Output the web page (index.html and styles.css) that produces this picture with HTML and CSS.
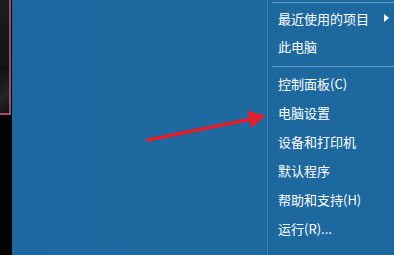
FILE: index.html
```html
<!DOCTYPE html>
<html lang="zh">
<head>
<meta charset="utf-8">
<link rel="stylesheet" href="styles.css">
</head>
<body>
<div class="screen">
  <div class="strip">
    <div class="thumb"></div>
  </div>
  <div class="desktop"></div>
  <div class="menu">
    <div class="sep first"></div>
    <div class="group g1">
      <div class="item">最近使用的项目<span class="caret"></span></div>
      <div class="item">此电脑</div>
    </div>
    <div class="sep second"></div>
    <div class="group g2">
      <div class="item">控制面板(C)</div>
      <div class="item">电脑设置</div>
      <div class="item">设备和打印机</div>
      <div class="item">默认程序</div>
      <div class="item">帮助和支持(H)</div>
      <div class="item">运行(R)...</div>
    </div>
  </div>
  <svg class="arrow" width="394" height="255" viewBox="0 0 394 255">
    <line x1="148" y1="140" x2="252" y2="119" stroke="#e21f2c" stroke-width="3.5" stroke-linecap="round"/>
    <polygon points="266,116 247.5,110.5 251,128" fill="#e21f2c"/>
  </svg>
</div>
</body>
</html>
```

FILE: styles.css
```css
html, body {
  margin: 0;
  padding: 0;
}
body {
  width: 394px;
  height: 255px;
  overflow: hidden;
  background: #1e68a0;
  font-family: "Noto Sans CJK SC", "Noto Sans", sans-serif;
}
.screen {
  position: relative;
  display: flex;
  width: 394px;
  height: 255px;
}
.strip {
  width: 12px;
  flex: none;
  background: #030304;
}
.thumb {
  width: 9px;
  height: 113px;
  background: linear-gradient(160deg, #1c1b20 0%, #121115 60%, #26252a 85%, #111014 100%);
  border-right: 2px solid #a34f62;
  border-bottom: 2px solid #a34f62;
}
.desktop {
  width: 255px;
  flex: none;
  background: linear-gradient(90deg, #1e67a0, #1f69a1);
}
.menu {
  flex: 1;
  border-left: 1px solid #3c7fb6;
  background: #1e68a0;
  color: #ffffff;
  font-size: 13px;
  display: flex;
  flex-direction: column;
}
.sep {
  height: 1px;
  margin-left: 4px;
  background: #5d97c6;
}
.sep.first {
  margin-top: 2px;
}
.group {
  display: flex;
  flex-direction: column;
}
.g1 {
  margin-top: 1px;
}
.g1 .item {
  height: 28px;
}
.sep.second {
  margin-top: 6px;
}
.g2 {
  margin-top: 2px;
}
.g2 .item {
  height: 29px;
}
.item {
  display: flex;
  align-items: center;
  padding-left: 10px;
  line-height: 1;
  white-space: nowrap;
  position: relative;
}
.caret {
  position: absolute;
  left: 116px;
  top: 50%;
  margin-top: -4px;
  width: 0;
  height: 0;
  border-top: 4px solid transparent;
  border-bottom: 4px solid transparent;
  border-left: 5px solid #ffffff;
}
.arrow {
  position: absolute;
  left: 0;
  top: 0;
  pointer-events: none;
}
```
